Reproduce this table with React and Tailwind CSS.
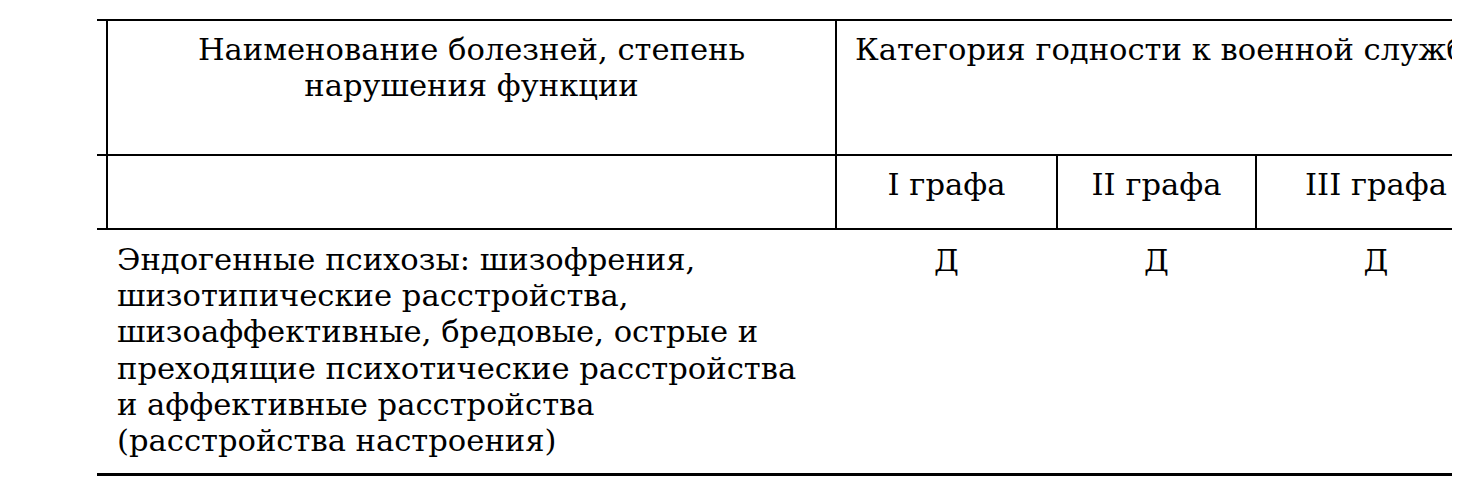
import React from 'react';

const serif = { fontFamily: '"DejaVu Serif", "Liberation Serif", serif' };

const grades = [
  { label: 'I графа', w: 'w-[221px]', mark: 'Д' },
  { label: 'II графа', w: 'w-[199px]', mark: 'Д' },
  { label: 'III графа', w: 'w-[240px]', mark: 'Д' },
];

export default function App() {
  return (
    <div className="bg-white min-h-screen pt-[19px]" style={serif}>
      <div className="ml-[97px] w-[1355px] overflow-hidden text-black text-[30.6px] leading-[36px]">
        <div className="w-[1500px]">
          {/* header: disease name + category */}
          <div className="flex h-[135px] border-t-2 border-black">
            <div className="w-[9px] shrink-0" />
            <div className="w-[729px] shrink-0 border-l-2 border-black pt-[11px] px-4 text-center">
              Наименование болезней, степень нарушения функции
            </div>
            <div className="flex-1 border-l-2 border-black pt-[11px] pl-[18px] whitespace-nowrap">
              Категория годности к военной службе
            </div>
          </div>

          {/* header: columns */}
          <div className="flex h-[74px] border-t-2 border-black">
            <div className="w-[9px] shrink-0" />
            <div className="w-[729px] shrink-0 border-l-2 border-black" />
            {grades.map((g) => (
              <div key={g.label} className={`${g.w} shrink-0 border-l-2 border-black pt-[11px] text-center`}>
                {g.label}
              </div>
            ))}
            <div className="flex-1 border-l-2 border-black" />
          </div>

          {/* body row */}
          <div className="flex border-t-2 border-b-[3px] border-black">
            <div className="w-[738px] shrink-0 pl-[20px] pr-[20px] pt-[12px] pb-[14px] leading-[36.2px]">
              Эндогенные психозы: шизофрения, шизотипические расстройства, шизоаффективные, бредовые, острые и
              преходящие психотические расстройства и аффективные расстройства (расстройства настроения)
            </div>
            {grades.map((g) => (
              <div key={g.label} className={`${g.w} shrink-0 border-l-2 border-transparent pt-[13px] text-center`}>
                {g.mark}
              </div>
            ))}
          </div>
        </div>
      </div>
    </div>
  );
}
